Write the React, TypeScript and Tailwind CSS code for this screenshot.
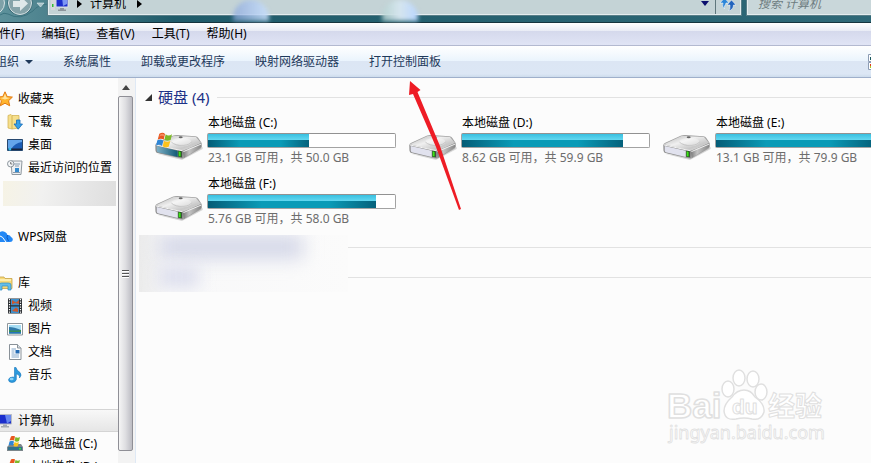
import type { ReactNode } from "react";

type Drive = {
  letter: string;
  detail: string;
  used: number;
  system?: boolean;
};

const drives: Drive[] = [
  { letter: "C", detail: "23.1 GB 可用，共 50.0 GB", used: 54, system: true },
  { letter: "D", detail: "8.62 GB 可用，共 59.9 GB", used: 86 },
  { letter: "E", detail: "13.1 GB 可用，共 79.9 GB", used: 84 },
  { letter: "F", detail: "5.76 GB 可用，共 58.0 GB", used: 90 },
];

const menus = ["文件(F)", "编辑(E)", "查看(V)", "工具(T)", "帮助(H)"];
const commands = ["系统属性", "卸载或更改程序", "映射网络驱动器", "打开控制面板"];

function Flag() {
  return (
    <g>
      <path d="M16 8 Q27 2 33 9 L29 26 Q21 20 11 26 Z" fill="#e8571f" />
      <path d="M35 10 Q43 17 54 10 L50 27 Q40 32 31 27 Z" fill="#7db928" />
      <path d="M10 28 Q20 23 28 29 L24 45 Q16 38 6 44 Z" fill="#2f86d6" />
      <path d="M30 30 Q39 35 49 30 L44 47 Q35 52 26 46 Z" fill="#fbc21c" />
      <path d="M18 11 Q26 6 31 11 L30 16 Q23 12 16 17 Z" fill="#f9a07a" opacity=".7" />
    </g>
  );
}

function DriveIcon({ system }: { system?: boolean }) {
  return (
    <svg viewBox="0 0 150 90" className="mt-4 h-[30px] w-[50px] shrink-0" aria-hidden="true">
      <defs>
        <linearGradient id="top" x1="0" y1="0" x2="1" y2="1">
          <stop offset="0" stopColor="#b0b0b0" />
          <stop offset=".4" stopColor="#f0f0f0" />
          <stop offset=".7" stopColor="#c8c8c8" />
          <stop offset="1" stopColor="#ececec" />
        </linearGradient>
        <linearGradient id="side" x1="0" y1="0" x2="1" y2="0">
          <stop offset="0" stopColor="#777" />
          <stop offset=".35" stopColor="#c4c4c4" />
          <stop offset="1" stopColor="#858585" />
        </linearGradient>
        <linearGradient id="teal" x1="0" y1="0" x2="1" y2="0">
          <stop offset="0" stopColor="#7fb0c6" />
          <stop offset="1" stopColor="#125a76" />
        </linearGradient>
      </defs>
      <path d="M8 68 L84 87 L146 54 L146 48 L84 78 Z" fill="#000" opacity=".15" />
      <path d="M4 42 Q4 38 10 35 L56 14 Q62 11 70 12 L124 16 Q130 17 133 21 L143 36 L143 48 Q143 51 138 54 L92 80 Q86 84 78 82 L10 66 Q5 64 5 60 Z" fill="#a0a0a0" />
      <path d="M6 40 L60 14 L126 18 L141 36 L86 60 Z" fill="url(#top)" />
      <path d="M50 32 Q58 20 86 21 Q116 22 112 36 Q104 46 84 46 Z" fill="#fff" opacity=".35" />
      <path d="M52 33 Q64 45 90 43 Q108 41 113 32" fill="none" stroke="#b8b8b8" strokeWidth="2" />
      <ellipse cx="80" cy="19" rx="6" ry="3" fill="#666" />
      <path d="M86 60 L142 36 L142 48 L90 80 Z" fill="url(#side)" />
      <path d="M88 62 L142 39" stroke="#eee" strokeWidth="3" />
      <path d="M5 42 L84 59 Q87 60 87 65 L86 82 L10 65 Q5 63 5 58 Z" fill="#8a8a8a" />
      <path d="M8 45 L71 59 L71 78 L11 64 Q8 62 8 58 Z" fill={system ? "url(#teal)" : "#e1e2ee"} />
      <path d="M6 42 L84 59" stroke="#f4f4f4" strokeWidth="3" />
      <path d="M73 59 L83 61 L83 79 L73 77 Z" fill="#173817" />
      <path d="M74 61 L80 62 L80 77 L74 76 Z" fill="#3fe51a" />
      {system && <Flag />}
    </svg>
  );
}

function DriveTile({ drive }: { drive: Drive }) {
  return (
    <li className="flex gap-[3px]">
      <DriveIcon system={drive.system} />
      <div className="w-[189px]">
        <div className="px-px leading-4 text-black">本地磁盘 ({drive.letter}:)</div>
        <div className="mt-[2px] h-[15px] rounded-xs border border-[#a3a3a3] border-t-[#929292] bg-white">
          <div
            className="h-full bg-[linear-gradient(90deg,rgba(0,50,75,.6),transparent_32%,transparent_72%,rgba(0,50,75,.55))] bg-[#0a9bb7]"
            style={{ width: `${drive.used}%` }}
          >
            <div className="h-[6px] bg-linear-to-b from-[#37bfe0] to-[#62d8f0]" />
          </div>
        </div>
        <div className="mt-[2px] px-px leading-4 text-[#6d6d6d]">{drive.detail}</div>
      </div>
    </li>
  );
}

function Icon({ children }: { children: ReactNode }) {
  return (
    <svg viewBox="0 0 16 16" className="size-4 shrink-0" aria-hidden="true">
      {children}
    </svg>
  );
}

const StarIcon = () => (
  <Icon>
    <path d="M8 .8 L10.2 5.6 L15.4 6.1 L11.6 9.7 L12.7 14.8 L8 12.2 L3.3 14.8 L4.4 9.7 L.6 6.1 L5.8 5.6 Z" fill="#ffb52e" stroke="#e27912" />
    <path d="M8 2.8 L9.5 6.6 L13 7 L8 8.5 L3.5 7 L6.5 6.6 Z" fill="#ffe3a0" />
  </Icon>
);

const DownloadIcon = () => (
  <Icon>
    <path d="M1 1.5 L4 .5 L5 1.5 H12 V14 L5 15 L1 14 Z" fill="#f6df8c" stroke="#cfae4b" strokeWidth=".7" />
    <path d="M5 1.5 V15" stroke="#cda947" strokeWidth=".8" />
    <path d="M9.5 6 H13 V10 H15.5 L11.2 15.2 L7 10 H9.5 Z" fill="#36a0e8" stroke="#1769b5" strokeWidth=".8" />
  </Icon>
);

const DesktopIcon = () => (
  <Icon>
    <path d="M.5 2.5 H15.5 V13.5 H.5 Z" fill="#1c5db5" stroke="#27486f" />
    <path d="M1 3 H15 V5 Q8 6 4 12 H1 Z" fill="#64a5ea" />
    <path d="M1 11.5 H15 V13 H1 Z" fill="#16243b" />
    <circle cx="2.8" cy="12" r="1.5" fill="#37b9e9" />
  </Icon>
);

const RecentIcon = () => (
  <Icon>
    <path d="M4 1 H15 L14 14.5 H5 Z" fill="#eef1f4" stroke="#8f989f" />
    <path d="M7 4 H13 M8 6 H12 M6 12.5 H13" stroke="#879aac" />
    <path d="M8 8 H12 V12 H8 Z" fill="#368bcd" />
    <circle cx="3.7" cy="3.8" r="3.2" fill="#f4f6f8" stroke="#8b949b" />
    <path d="M3.7 2 V4 H5.4" stroke="#555" strokeWidth=".8" fill="none" />
  </Icon>
);

const CloudIcon = () => (
  <Icon>
    <path d="M0 13 L1 5 Q4 1 8 3 Q10 4 10.500 6 Q13 5.500 14 8 Q16 9 15.800 11 Q15.500 13 13 13 Z" fill="#2388f5" />
    <path d="M1 6 Q6 7 9 13" fill="none" stroke="#fff" strokeWidth="1" />
    <path d="M10.500 6 Q9 8 11.500 12" fill="none" stroke="#0c57c4" strokeWidth="1" />
  </Icon>
);

const LibraryIcon = () => (
  <Icon>
    <path d="M0 2 H7 L8 3.5 H15 V13.5 H0 Z" fill="#f7d978" stroke="#c6a244" strokeWidth=".8" />
    <path d="M2 5 H14" stroke="#fff2bc" strokeWidth="1.5" />
    <path d="M2 15 V10 Q2 8 4.5 8 H11.5 Q14 8 14 10 V15 H11 V11 H5 V15 Z" fill="#64bde9" stroke="#2e8ec3" strokeWidth=".7" />
  </Icon>
);

const VideoIcon = () => (
  <Icon>
    <path d="M1 .5 H15 V15.5 H1 Z" fill="#292d31" />
    <path d="M4 1 H12 V7.2 H4 Z M4 8.5 H12 V15 H4 Z" fill="#3d91ce" />
    <path d="M5 2 L9 4.5 L12 2 V6 L8 5 L5 6.5 Z M5 13 L9 9.5 L11 11 V14 Z" fill="#ca5930" />
    <path d="M2.5 1 V15 M13.5 1 V15" stroke="#fff" strokeWidth="1.2" strokeDasharray="1.2 1.3" />
  </Icon>
);

const PictureIcon = () => (
  <Icon>
    <path d="M.5 2.5 H15.5 V14 H.5 Z" fill="#fff" stroke="#8e969c" />
    <path d="M2 4 H14 V12.5 H2 Z" fill="#a6ddf4" />
    <path d="M2 6 Q7 6 14 9 V10 H2 Z" fill="#2f78a8" />
    <path d="M2 9 Q5 10 14 9 V12.5 H2 Z" fill="#388e57" />
    <path d="M2 11 H14 V12.5 H2 Z" fill="#2673bd" />
  </Icon>
);

const DocumentIcon = () => (
  <Icon>
    <path d="M2.5 .5 H10.5 L14 4 V15.5 H2.5 Z" fill="#fff" stroke="#899198" />
    <path d="M10.5 .5 V4 H14" fill="#dce4ea" stroke="#899198" />
    <path d="M4.5 5 H9 M4.5 7 H7.5 M4.5 9 H7.5 M4.5 11 H12 M4.5 13 H12" stroke="#84a7c9" />
    <path d="M8.5 6 H12.5 V9.5 H8.5 Z" fill="#246bb3" />
  </Icon>
);

const MusicIcon = () => (
  <Icon>
    <path d="M7.5 .5 H9 Q9.5 3.5 13 5.5 Q15.3 8 12.5 11 Q13 7.5 9.3 7 V12.5 Q8.5 15.5 5 15.5 Q1.5 15.3 1.5 12.8 Q2 10 6 10 L7.5 10.4 Z" fill="#2b9ade" stroke="#1976ba" strokeWidth=".6" />
    <ellipse cx="4.6" cy="12" rx="2" ry="1.2" fill="#8bd3f7" />
  </Icon>
);

const ComputerIcon = () => (
  <Icon>
    <path d="M1.5 1.5 H14.5 V11 H1.5 Z" fill="#1b2ecc" stroke="#b9bcc4" />
    <path d="M8 2 H14 V8 L10 10.5 Z" fill="#6586ef" />
    <path d="M6 11.5 H10 V13 H12 V14.5 H4 V13 H6 Z" fill="#a4aab0" />
  </Icon>
);

const SmallDriveIcon = () => (
  <Icon>
    <path d="M0 11 L3 8 H14 L16 11 V15 H0 Z" fill="#7c868b" />
    <path d="M1 11 H15 V14 H1 Z" fill="#31718b" />
    <path d="M12 12 H14 V13.5 H12 Z" fill="#42df2d" />
    <path d="M4 .5 Q6 -1 8 .5 L7 4.5 Q5 3.5 2.5 4.5 Z" fill="#e8571f" />
    <path d="M8.500 1 Q11 2.5 13 1 L12 5 Q10 6.500 7.500 5 Z" fill="#7db928" />
    <path d="M2.500 5.500 Q5 4.200 7 5.500 L6 9.500 Q4 8 1.500 9.500 Z" fill="#2f86d6" />
    <path d="M7.500 6 Q9.700 7.500 11.900 6 L10.900 10 Q9 11 6.500 10 Z" fill="#fbc21c" />
  </Icon>
);

function NavItem({ icon, label, root, active }: { icon: ReactNode; label: string; root?: boolean; active?: boolean }) {
  return (
    <a
      href="#"
      className={`flex h-[23px] shrink-0 items-center gap-[5px] whitespace-nowrap ${root ? "-ml-[3px]" : "pl-[7px]"} ${
        active ? "border-y border-[#d4d4d4] bg-linear-to-b from-[#f8f8f8] to-[#e6e6e6]" : ""
      }`}
    >
      {icon}
      {label}
    </a>
  );
}

function Sidebar() {
  return (
    <nav className="flex w-[118px] shrink-0 flex-col gap-[23px] overflow-hidden bg-[#fcfcfc] pt-[9px] text-black">
      <div className="flex flex-col">
        <NavItem root icon={<StarIcon />} label="收藏夹" />
        <NavItem icon={<DownloadIcon />} label="下载" />
        <NavItem icon={<DesktopIcon />} label="桌面" />
        <NavItem icon={<RecentIcon />} label="最近访问的位置" />
        <div className="mr-[2px] ml-[3px] h-[23px] pt-[2px]">
          <div className="h-[25px] bg-[linear-gradient(100deg,#f6f3e5,#f1f1f0_35%,#e8e8e8_65%,#dedede)]" />
        </div>
      </div>
      <NavItem root icon={<CloudIcon />} label="WPS网盘" />
      <div className="flex flex-col">
        <NavItem root icon={<LibraryIcon />} label="库" />
        <NavItem icon={<VideoIcon />} label="视频" />
        <NavItem icon={<PictureIcon />} label="图片" />
        <NavItem icon={<DocumentIcon />} label="文档" />
        <NavItem icon={<MusicIcon />} label="音乐" />
      </div>
      <div className="flex flex-col">
        <NavItem root active icon={<ComputerIcon />} label="计算机" />
        <NavItem icon={<SmallDriveIcon />} label="本地磁盘 (C:)" />
        <NavItem icon={<SmallDriveIcon />} label="本地磁盘 (D:)" />
      </div>
    </nav>
  );
}

function Scrollbar() {
  return (
    <div className="flex w-[18px] shrink-0 flex-col border-r border-[#dfe9f5] bg-[#f3f3f3] pr-[2px] pb-3">
      <div className="flex h-[18px] items-center justify-center">
        <svg viewBox="0 0 8 5" className="h-[5px] w-2" aria-hidden="true">
          <path d="M0 5 L4 0 L8 5 Z" fill="#444" />
        </svg>
      </div>
      <div className="flex flex-1 flex-col items-center justify-center gap-px rounded-xs border border-[#8f8f96] bg-linear-to-r from-[#f5f5f5] via-[#dedee1] to-[#bcbcc3]">
        <span className="h-[2px] w-[7px] border-b border-white bg-[#555]" />
        <span className="h-[2px] w-[7px] border-b border-white bg-[#555]" />
        <span className="h-[2px] w-[7px] border-b border-white bg-[#555]" />
      </div>
    </div>
  );
}

function AddressBar() {
  return (
    <header className="flex h-[23px] shrink-0 items-end overflow-hidden border-b border-[#15343e] bg-linear-to-r from-[#5d919b] via-[#1f5b6a] via-20% to-[#2e6877]">
      <svg viewBox="0 0 48 23" className="h-[23px] w-12 shrink-0" aria-hidden="true">
        <path d="M0 16 Q4 13 8 15 Q20 22 33 12 Q37 6 48 5" fill="none" stroke="#3d7480" />
        <circle cx="-7" cy="4" r="11.5" fill="#7fa1a8" stroke="#d7e3e5" />
        <circle cx="20" cy="4" r="12.5" fill="#2f5f6b" />
        <circle cx="20" cy="4" r="11.5" fill="#86a4aa" stroke="#d7e3e5" />
        <path d="M13 2 H20 V-3 L28 4.5 L20 12 V8 H13 Z" fill="#dfe8e9" />
        <path d="M37 4 H44 L40.500 8 Z" fill="#a9c4ca" stroke="#dbe8ea" strokeWidth=".6" />
      </svg>
      <div className="mb-[7px] flex h-[22px] min-w-0 flex-1 items-center border border-t-0 border-[#e4edef] bg-[#c4d3d6] pl-[2px] text-black outline outline-[#587e88]">
        <svg viewBox="0 0 18 18" className="size-[18px]" aria-hidden="true">
          <path d="M5 1 H17 V12 H5 Z" fill="#1b2ecc" stroke="#dcdfe5" />
          <path d="M11 2 H16 V9 L12 11 Z" fill="#7c96f4" />
          <path d="M9 13 H13 V14.500 H15 V16 H7 V14.500 H9 Z" fill="#8d959c" />
          <path d="M0 5 H4 V15 H0 Z" fill="#d5d8da" />
          <path d="M1 9 H2.500 V12 H1 Z" fill="#33be37" />
        </svg>
        <svg viewBox="0 0 5 8" className="ml-2 h-2 w-[5px]" aria-hidden="true">
          <path d="M0 0 L5 4 L0 8 Z" fill="#000" />
        </svg>
        <button className="ml-2">计算机</button>
        <svg viewBox="0 0 5 8" className="ml-[11px] h-2 w-[5px]" aria-hidden="true">
          <path d="M0 0 L5 4 L0 8 Z" fill="#000" />
        </svg>
        <button aria-label="历史记录" className="ml-auto flex h-full items-center pr-[6px]">
          <svg viewBox="0 0 8 5" className="h-[5px] w-2">
            <path d="M0 0 H8 L4 5 Z" fill="#0b0f6e" />
          </svg>
        </button>
        <button aria-label="刷新" className="flex h-full w-[25px] items-center justify-center border-l border-[#5f777d]">
          <svg viewBox="0 0 16 14" className="h-[14px] w-4">
            <path d="M4.500 9 V12 Q1.500 9 3 6 H0 L4.500 1 L9 6 H6 Q5.500 8 4.500 9 Z" fill="#2d86d8" stroke="#fff" strokeWidth=".5" />
            <path d="M10 8 H7 L11.500 3 L16 8 H13.500 Q13.500 12.500 8.500 14 Q10.500 12 10 8 Z" fill="#2365bd" stroke="#fff" strokeWidth=".5" />
          </svg>
        </button>
      </div>
      <input
        type="search"
        aria-label="搜索 计算机"
        placeholder="搜索 计算机"
        className="mb-[7px] ml-[6px] h-[22px] w-[124px] shrink-0 border border-t-0 border-r-0 border-[#e4edef] bg-[#c9d7da] pl-[10px] italic outline outline-[#587e88] placeholder:text-[#6e7d81]"
      />
    </header>
  );
}

function Watermark() {
  return (
    <svg
      viewBox="0 0 164 84"
      className="absolute right-[43px] bottom-[14px] h-[84px] w-[164px]"
      fill="#fff"
      stroke="#e0e0e0"
      strokeLinejoin="round"
      aria-hidden="true"
    >
      <g fontFamily="'Liberation Sans', 'Noto Sans CJK SC', sans-serif" fontWeight="700">
        <text x="3" y="53" fontSize="35" strokeWidth="1.500">Bai</text>
        <g strokeWidth="1.500">
          <ellipse cx="64" cy="24" rx="6" ry="8" />
          <ellipse cx="75" cy="13" rx="6" ry="8" />
          <ellipse cx="89" cy="14" rx="6" ry="8" />
          <ellipse cx="97" cy="27" rx="6" ry="8" />
          <path d="M80 25 Q87 25 91 32 Q101 39 100 47 Q97 56 88 54 Q80 52 72 54 Q61 56 60 46 Q60 39 68 32 Q73 25 80 25 Z" />
        </g>
        <text x="68" y="49" fontSize="21">du</text>
        <text x="104" y="51" fontSize="27">经验</text>
      </g>
      <text x="5" y="74" fontSize="18" strokeWidth=".8" fontFamily="'Noto Sans', sans-serif">jingyan.baidu.com</text>
    </svg>
  );
}

export default function App() {
  return (
    <div className="relative flex h-screen flex-col overflow-hidden bg-[#fcfcfc] font-['Noto_Sans','Noto_Sans_CJK_SC',sans-serif] text-[12px] leading-4">
      <AddressBar />
      <div className="absolute top-0 left-[233px] h-[21px] w-9 rounded-t-full bg-linear-to-r from-[#8aa6dc]/70 to-[#c8dffb]/90 blur-[2px]" />
      <div className="absolute top-0 left-[382px] h-[21px] w-9 rounded-t-full bg-linear-to-r from-[#b5d3d0]/80 via-[#d5e5ee] to-[#b9d5ff] blur-[2px]" />

      <div
        role="menubar"
        className="flex h-[23px] shrink-0 items-center gap-[17px] border-b border-[#b3b9d0] bg-[linear-gradient(#fff,#e8ebf5_37%,#d5d9ec_38%,#e0e4f5)] text-black"
      >
        {menus.map((menu) => (
          <button key={menu} role="menuitem" className="shrink-0 first:-ml-[13px]">
            {menu}
          </button>
        ))}
      </div>

      <div className="flex h-8 shrink-0 items-center gap-[30px] overflow-hidden border-b border-[#9fb0cb] bg-[linear-gradient(#fff,#eaf4fd_49%,#dce6f4_50%,#dce7f5_90%,#cddcec)] text-[#1e395b]">
        <button className="-ml-[5px] flex shrink-0 items-center gap-[6px]">
          组织
          <svg viewBox="0 0 8 4" className="h-1 w-2" aria-hidden="true">
            <path d="M0 0 H8 L4 4 Z" fill="currentColor" />
          </svg>
        </button>
        {commands.map((command) => (
          <button key={command} className="shrink-0">
            {command}
          </button>
        ))}
        <button aria-label="更改您的视图" className="-mr-[13px] ml-auto shrink-0">
          <svg viewBox="0 0 16 16" className="size-4">
            <path d="M.5 .5 H15.500 V7.500 H.5 Z M.5 8.500 H15.500 V15.500 H.5 Z" fill="#fff" stroke="#8c9cb4" />
            <path d="M2 3 H6 V6 H2 Z" fill="#1a5a5e" />
            <path d="M2 10 H6 V12 H2 Z" fill="#e03a1c" />
            <path d="M2 12 H6 V14 H2 Z" fill="#a6c828" />
          </svg>
        </button>
      </div>

      <div className="flex min-h-0 flex-1">
        <Sidebar />
        <Scrollbar />
        <main className="min-w-0 flex-1 overflow-hidden pt-2">
          <div className="flex h-[22px] items-center">
            <svg viewBox="0 0 7 7" className="ml-[9px] size-[7px]" aria-hidden="true">
              <path d="M7 0 V7 H0 Z" fill="#333" />
            </svg>
            <h2 className="ml-[6px] text-[15px] text-[#1e3287]">硬盘 (4)</h2>
            <div className="ml-2 h-px flex-1 bg-[#e2e2e2]" />
          </div>
          <ul className="mt-[7px] ml-[18px] grid grid-cols-[repeat(3,254px)] gap-y-[10px]">
            {drives.map((drive) => (
              <DriveTile key={drive.letter} drive={drive} />
            ))}
          </ul>
          <div className="mt-2 ml-[3px] flex">
            <div className="h-[57px] w-[209px] overflow-hidden bg-linear-to-r from-[#ebebeb] via-[#f8f8f9] via-15% to-[#fbfbfb]">
              <div className="ml-5 h-6 w-36 bg-[#d5d8e8] blur-[9px]" />
              <div className="mt-2 ml-5 h-5 w-10 bg-[#dcdeed] blur-[8px]" />
            </div>
            <div className="mt-3 h-[31px] flex-1 border-y border-[#e2e2e2]" />
          </div>
        </main>
      </div>

      <svg viewBox="0 0 54 132" className="absolute top-[79px] left-[408px] h-[132px] w-[54px]" aria-hidden="true">
        <path d="M2 2 L12.500 11 L9.500 13 L32 67 L53 130 L51 131 L28 68 L5 15 L1 16 Z" fill="#ee1c25" />
      </svg>
      <Watermark />
    </div>
  );
}
